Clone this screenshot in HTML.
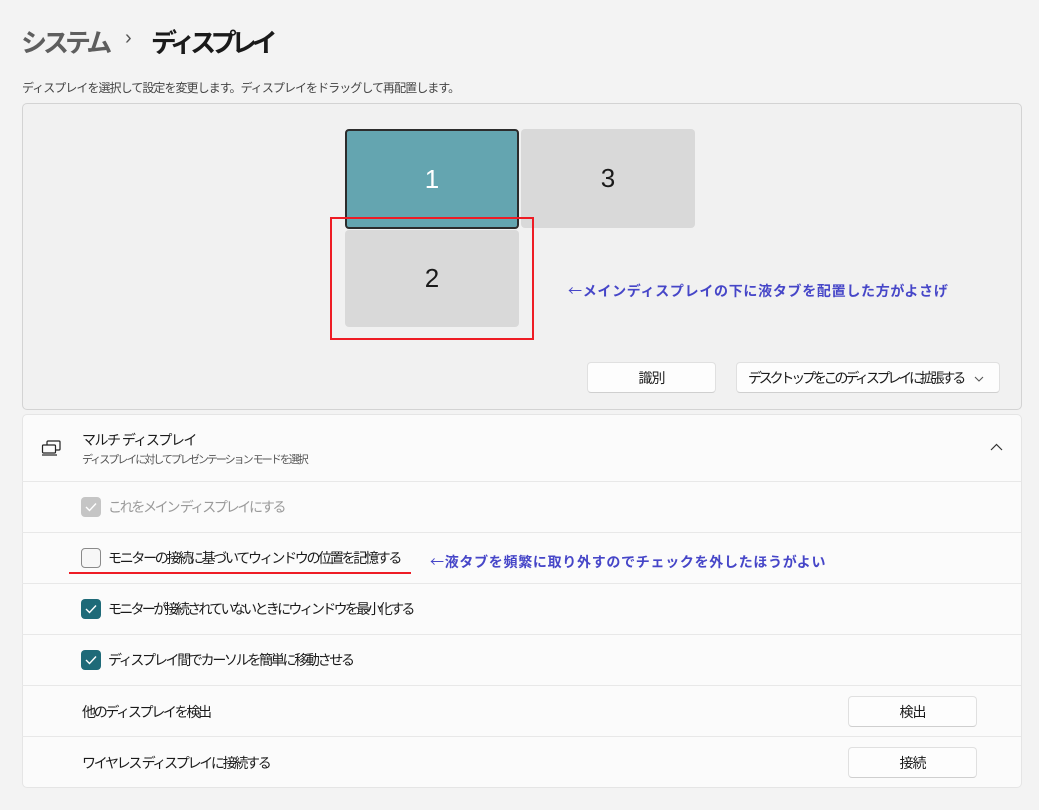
<!DOCTYPE html>
<html><head><meta charset="utf-8"><style>
*{box-sizing:border-box;margin:0;padding:0}
body{width:1039px;height:810px;background:#f3f3f3;font-family:"Liberation Sans","Noto Sans CJK JP",sans-serif;color:#1a1a1a;position:relative;overflow:hidden}
.a{position:absolute;white-space:nowrap}
.mon{position:absolute;border-radius:4px;font-size:26px;display:flex;align-items:center;justify-content:center}
.btn{position:absolute;background:#fdfdfd;border:1px solid #e0e0e0;border-bottom-color:#cfcfcf;border-radius:4px;font-size:14px;display:flex;align-items:center;justify-content:center;white-space:nowrap;letter-spacing:-1px}
.row{position:absolute;left:22px;width:999px;height:51px;border-top:1px solid #e8e8e8;font-size:14px}
.cb{position:absolute;left:59px;top:15px;width:20px;height:20px;border-radius:4px}
.cb.on{background:#1e6a78}
.cb svg{position:absolute;left:4px;top:5px}
.lbl{position:absolute;left:86px;top:15px;letter-spacing:-2.3px;white-space:nowrap}
.ann{font-size:14px;color:#4646c8;letter-spacing:0.7px;font-weight:bold}
</style></head><body>
<div class="a" style="left:21px;top:23px;font-size:26px;color:#5e5e5e;font-weight:bold;letter-spacing:-4px">システム</div>
<div class="a" style="left:125px;top:27px;font-size:20px;color:#555">›</div>
<div class="a" style="left:151px;top:23px;font-size:26px;font-weight:bold;color:#1a1a1a;letter-spacing:-5.5px">ディスプレイ</div>
<div class="a" style="left:22px;top:79px;font-size:12px;color:#444;letter-spacing:-0.95px">ディスプレイを選択して設定を変更します。ディスプレイをドラッグして再配置します。</div>

<div class="a" style="left:22px;top:103px;width:1000px;height:307px;background:#f1f1f1;border:1px solid #d3d3d3;border-radius:5px"></div>
<div class="mon" style="left:345px;top:129px;width:174px;height:100px;background:#64a5b0;border:2px solid #2c2c2c;color:#fff">1</div>
<div class="mon" style="left:521px;top:129px;width:174px;height:99px;background:#d9d9d9">3</div>
<div class="mon" style="left:345px;top:230px;width:174px;height:97px;background:#d9d9d9">2</div>
<div class="a" style="left:330px;top:217px;width:204px;height:123px;border:2px solid #ee1c25"></div>
<div class="a ann" style="left:568px;top:281px"><span style="font-family:'Noto Sans CJK JP',sans-serif;font-weight:normal">←</span>メインディスプレイの下に液タブを配置した方がよさげ</div>
<div class="btn" style="left:587px;top:362px;width:129px;height:31px">識別</div>
<div class="btn" style="left:736px;top:362px;width:264px;height:31px;justify-content:flex-start;padding-left:11px;letter-spacing:-3.2px">デスクトップをこのディスプレイに拡張する<svg style="position:absolute;right:15px;top:13px" width="10" height="6" viewBox="0 0 10 6" fill="none" stroke="#555" stroke-width="1.1"><path d="M1 1l4 4 4-4"/></svg></div>

<div class="a" style="left:22px;top:414px;width:1000px;height:374px;background:#fbfbfb;border:1px solid #e5e5e5;border-radius:5px"></div>
<svg class="a" style="left:41px;top:440px" width="22" height="16" viewBox="0 0 22 16" fill="none" stroke="#222" stroke-width="1.2"><rect x="6" y="1" width="13" height="9" rx="1"/><rect x="1.5" y="5" width="13" height="8" rx="1" fill="#fbfbfb"/><path d="M1 15h15"/></svg>
<div class="a" style="left:82px;top:430px;font-size:14px;letter-spacing:-1.5px">マルチ ディスプレイ</div>
<div class="a" style="left:82px;top:451px;font-size:11px;color:#555;letter-spacing:-2px">ディスプレイに対してプレゼンテーション モードを選択</div>
<svg class="a" style="left:990px;top:443px" width="13" height="8" viewBox="0 0 13 8" fill="none" stroke="#333" stroke-width="1.2"><path d="M1 7l5.5-5.5L12 7"/></svg>

<div class="row" style="top:481px"><div class="cb" style="background:#c5c5c5"><svg width="12" height="10"><path d="M1 5l3.5 3.5L11 1.5" stroke="#fff" stroke-width="1.4" fill="none"/></svg></div><div class="lbl" style="color:#9a9a9a">これをメイン ディスプレイにする</div></div>
<div class="row" style="top:532px"><div class="cb" style="border:1px solid #8a8a8a;background:#f7f7f7"></div><div class="lbl">モニターの接続に基づいてウィンドウの位置を記憶する</div>
<div class="a" style="left:47px;top:39px;width:342px;height:2px;background:#ee1c25"></div>
<div class="a ann" style="left:408px;top:19px"><span style="font-family:'Noto Sans CJK JP',sans-serif;font-weight:normal">←</span>液タブを頻繁に取り外すのでチェックを外したほうがよい</div></div>
<div class="row" style="top:583px"><div class="cb on"><svg width="12" height="10"><path d="M1 5l3.5 3.5L11 1.5" stroke="#fff" stroke-width="1.4" fill="none"/></svg></div><div class="lbl" style="letter-spacing:-2.7px">モニターが接続されていないときにウィンドウを最小化する</div></div>
<div class="row" style="top:634px"><div class="cb on"><svg width="12" height="10"><path d="M1 5l3.5 3.5L11 1.5" stroke="#fff" stroke-width="1.4" fill="none"/></svg></div><div class="lbl">ディスプレイ間でカーソルを簡単に移動させる</div></div>
<div class="row" style="top:685px"><div class="lbl" style="left:60px;top:16px">他のディスプレイを検出</div></div>
<div class="btn" style="left:848px;top:696px;width:129px;height:31px">検出</div>
<div class="row" style="top:736px"><div class="lbl" style="left:60px;top:16px">ワイヤレス ディスプレイに接続する</div></div>
<div class="btn" style="left:848px;top:747px;width:129px;height:31px">接続</div>
</body></html>
